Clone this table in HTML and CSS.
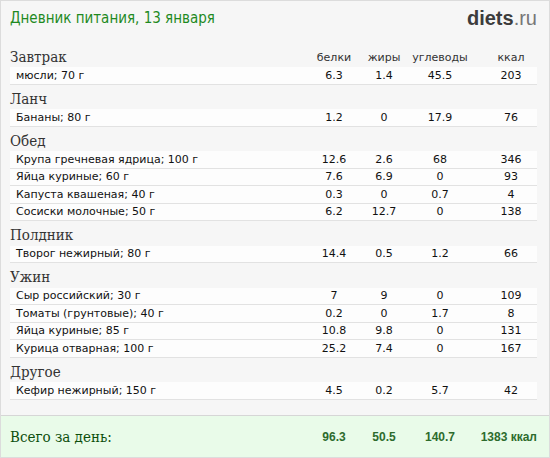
FILE: index.html
```html
<!DOCTYPE html>
<html lang="ru">
<head>
    <meta charset="UTF-8">
    <title>Дневник питания</title>
    <link rel="stylesheet" href="styles.css">
</head>
<body>
    <div class="diary">
        <div class="top">
            <div class="title">Дневник питания, 13 января</div>
            <div class="logo"><b>diets</b>.ru</div>
        </div>

        <div class="meals">
            <div class="meal first">
                <div class="meal-head"><span class="meal-name">Завтрак</span><span>белки</span><span>жиры</span><span>углеводы</span><span class="kcal">ккал</span></div>
                <div class="item"><span class="food">мюсли; 70 г</span><span>6.3</span><span>1.4</span><span>45.5</span><span class="kcal">203</span></div>
            </div>

            <div class="meal">
                <div class="meal-head"><span class="meal-name">Ланч</span></div>
                <div class="item"><span class="food">Бананы; 80 г</span><span>1.2</span><span>0</span><span>17.9</span><span class="kcal">76</span></div>
            </div>

            <div class="meal">
                <div class="meal-head"><span class="meal-name">Обед</span></div>
                <div class="item"><span class="food">Крупа гречневая ядрица; 100 г</span><span>12.6</span><span>2.6</span><span>68</span><span class="kcal">346</span></div>
                <div class="item"><span class="food">Яйца куриные; 60 г</span><span>7.6</span><span>6.9</span><span>0</span><span class="kcal">93</span></div>
                <div class="item"><span class="food">Капуста квашеная; 40 г</span><span>0.3</span><span>0</span><span>0.7</span><span class="kcal">4</span></div>
                <div class="item"><span class="food">Сосиски молочные; 50 г</span><span>6.2</span><span>12.7</span><span>0</span><span class="kcal">138</span></div>
            </div>

            <div class="meal">
                <div class="meal-head"><span class="meal-name">Полдник</span></div>
                <div class="item"><span class="food">Творог нежирный; 80 г</span><span>14.4</span><span>0.5</span><span>1.2</span><span class="kcal">66</span></div>
            </div>

            <div class="meal">
                <div class="meal-head"><span class="meal-name">Ужин</span></div>
                <div class="item"><span class="food">Сыр российский; 30 г</span><span>7</span><span>9</span><span>0</span><span class="kcal">109</span></div>
                <div class="item"><span class="food">Томаты (грунтовые); 40 г</span><span>0.2</span><span>0</span><span>1.7</span><span class="kcal">8</span></div>
                <div class="item"><span class="food">Яйца куриные; 85 г</span><span>10.8</span><span>9.8</span><span>0</span><span class="kcal">131</span></div>
                <div class="item"><span class="food">Курица отварная; 100 г</span><span>25.2</span><span>7.4</span><span>0</span><span class="kcal">167</span></div>
            </div>

            <div class="meal">
                <div class="meal-head"><span class="meal-name">Другое</span></div>
                <div class="item"><span class="food">Кефир нежирный; 150 г</span><span>4.5</span><span>0.2</span><span>5.7</span><span class="kcal">42</span></div>
            </div>
        </div>

        <div class="total">
            <span class="total-label">Всего за день:</span>
            <span>96.3</span><span>50.5</span><span>140.7</span><span class="total-kcal">1383 ккал</span>
        </div>
    </div>
</body>
</html>
```

FILE: styles.css
```css
body {
    margin: 0;
    font-family: "DejaVu Sans", Verdana, sans-serif;
}
.diary {
    width: 550px;
    height: 458px;
    box-sizing: border-box;
    border: 1px solid #dcdcdc;
    background-color: #f6f6f6;
    display: flex;
    flex-direction: column;
}
.top {
    height: 34px;
    padding: 0 12px 0 9px;
    display: flex;
    align-items: center;
    justify-content: space-between;
}
.title {
    font-family: "DejaVu Sans Condensed", "DejaVu Sans", sans-serif;
    font-stretch: condensed;
    font-size: 15px;
    color: #1f8a1f;
}
.logo {
    font-family: "Liberation Sans", Arial, sans-serif;
    font-size: 20px;
    color: #777;
}
.logo b {
    color: #3c3c3c;
}
.meals {
    padding: 10px 12px 0 9px;
}
/* shared column layout for heads, items and the total */
.meal-head, .item, .total {
    display: grid;
    grid-template-columns: 1fr 48px 52px 60px 67px;
    align-items: center;
}
.meal-head span, .item span, .total span {
    text-align: center;
}
.kcal {
    padding-left: 15px;
}
.meal-head {
    height: 24.5px;
    padding-top: 4px;
    box-sizing: border-box;
    font-size: 11px;
    color: #333;
}
.first .meal-head {
    height: 22px;
    padding-top: 2px;
}
.meal-head .meal-name {
    text-align: left;
    font-family: "DejaVu Serif Condensed", "DejaVu Serif", serif;
    font-stretch: condensed;
    font-size: 15px;
    color: #333;
}
.item {
    height: 17.5px;
    box-sizing: border-box;
    background-color: #fdfdfd;
    border-bottom: 1px solid #e2e2e2;
    font-size: 11px;
    color: #111;
}
.item .food {
    text-align: left;
    padding-left: 6px;
}
.total {
    margin-top: auto;
    height: 41px;
    padding: 0 12px 0 9px;
    background-color: #e9fbe9;
    border-top: 1px solid #d6d6d6;
    font-family: "Liberation Sans", Arial, sans-serif;
    font-size: 12px;
    font-weight: bold;
    color: #2d6b2d;
}
.total .total-label {
    text-align: left;
    font-family: "DejaVu Serif Condensed", "DejaVu Serif", serif;
    font-stretch: condensed;
    font-size: 15px;
    font-weight: normal;
    color: #0d4f0d;
}
.total .total-kcal {
    text-align: right;
}
```
